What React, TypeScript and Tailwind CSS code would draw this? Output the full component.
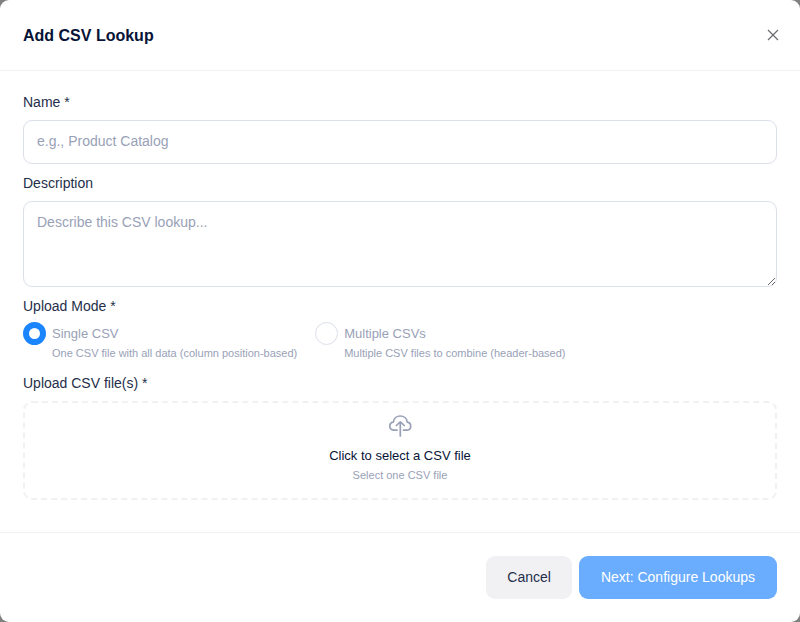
import { useState } from "react";

interface UploadMode {
    value: string;
    title: string;
    hint: string;
}

const UPLOAD_MODES: UploadMode[] = [
    { value: "single", title: "Single CSV", hint: "One CSV file with all data (column position-based)" },
    { value: "multiple", title: "Multiple CSVs", hint: "Multiple CSV files to combine (header-based)" },
];

const LABEL_CLS = "block text-sm leading-5 text-[#252f4a]";
const FIELD_CLS =
    "block w-full rounded-[9px] border border-[#dbdfe9] bg-white px-[13px] text-sm text-[#071437] placeholder:text-[#99a1b7] outline-none focus:border-[#1b84ff]";

function CloseIcon() {
    return (
        <svg width="12" height="12" viewBox="0 0 12 12" fill="none" stroke="#6b6b72" strokeWidth="1.2" aria-hidden="true">
            <path d="M1 1l10 10M11 1L1 11" />
        </svg>
    );
}

function CloudUploadIcon() {
    return (
        <svg width="24" height="24" viewBox="0 0 24 24" fill="none" stroke="#99a1b7" strokeWidth="1.7" strokeLinecap="round" strokeLinejoin="round" aria-hidden="true">
            <path d="M9 16.2H5.2A4.1 4.1 0 0 1 5.3 8.1C5.8 4.6 8.7 2 12.3 2s6.5 2.6 7 6.1a4.1 4.1 0 0 1-.1 8.1H15.5" />
            <path d="M12.300 22V8M8.300 11.500L12.300 7.800l4 3.700" />
        </svg>
    );
}

export default function App() {
    const [mode, setMode] = useState("single");

    return (
        <div className="min-h-screen bg-[#808080] font-['Liberation_Sans',Arial,sans-serif]">
            <div role="dialog" aria-labelledby="dialog-title" className="flex min-h-screen flex-col rounded-[9px] bg-white">
                {/* Header */}
                <div className="flex items-center justify-between border-b border-[#f1f1f4] px-[23px] py-[22px]">
                    <h2 id="dialog-title" className="pt-[2px] text-base leading-6 font-bold text-[#071437]">Add CSV Lookup</h2>
                    <button type="button" aria-label="Close" className="-mr-[2px] p-0">
                        <CloseIcon />
                    </button>
                </div>

                {/* Form */}
                <form className="flex-1 px-[23px] pt-[21px] pb-8">
                    <label htmlFor="name" className={`${LABEL_CLS} mb-2`}>Name *</label>
                    <input id="name" type="text" placeholder="e.g., Product Catalog" className={`${FIELD_CLS} h-11 pb-[2px]`} />

                    <label htmlFor="description" className={`${LABEL_CLS} mt-[9px] mb-2`}>Description</label>
                    <textarea id="description" placeholder="Describe this CSV lookup..." className={`${FIELD_CLS} h-[86px] resize-y py-[10px]`} />

                    <fieldset className="mt-[9px]">
                        <legend className={`${LABEL_CLS} mb-[6px]`}>Upload Mode *</legend>
                        <div className="flex flex-wrap gap-[18px]">
                            {UPLOAD_MODES.map(({ value, title, hint }) => (
                                <label key={value} className="flex gap-[6px] text-[#99a1b7]">
                                    <input
                                        type="radio"
                                        name="mode"
                                        value={value}
                                        checked={mode === value}
                                        onChange={() => setMode(value)}
                                        className="size-[23px] shrink-0 appearance-none rounded-full border border-[#dbdfe9] bg-white checked:border-[6px] checked:border-[#1b84ff]"
                                    />
                                    <span>
                                        <span className="block text-[13px] leading-6">{title}</span>
                                        <span className="block text-[11px] leading-[14px]">{hint}</span>
                                    </span>
                                </label>
                            ))}
                        </div>
                    </fieldset>

                    <p id="upload-label" className={`${LABEL_CLS} mt-[13px] mb-2`}>Upload CSV file(s) *</p>
                    <button
                        type="button"
                        aria-describedby="upload-label"
                        className="flex w-full flex-col items-center rounded-[9px] border-2 border-dashed border-[#f1f1f4] pt-[11px] pb-[14px]"
                    >
                        <CloudUploadIcon />
                        <span className="mt-2 text-[13px] leading-5 text-[#071437]">Click to select a CSV file</span>
                        <span className="text-[11px] leading-[18px] text-[#99a1b7]">Select one CSV file</span>
                    </button>
                </form>

                {/* Footer */}
                <div className="flex justify-end gap-[7px] border-t border-[#f1f1f4] p-[23px]">
                    <button type="button" className="h-[43px] rounded-[9px] bg-[#f1f1f4] px-[21px] pb-[2px] text-sm text-[#252f4a]">Cancel</button>
                    <button type="button" className="h-[43px] rounded-[9px] bg-[#6aadff] px-[22px] pb-[2px] text-sm text-white">Next: Configure Lookups</button>
                </div>
            </div>
        </div>
    );
}
